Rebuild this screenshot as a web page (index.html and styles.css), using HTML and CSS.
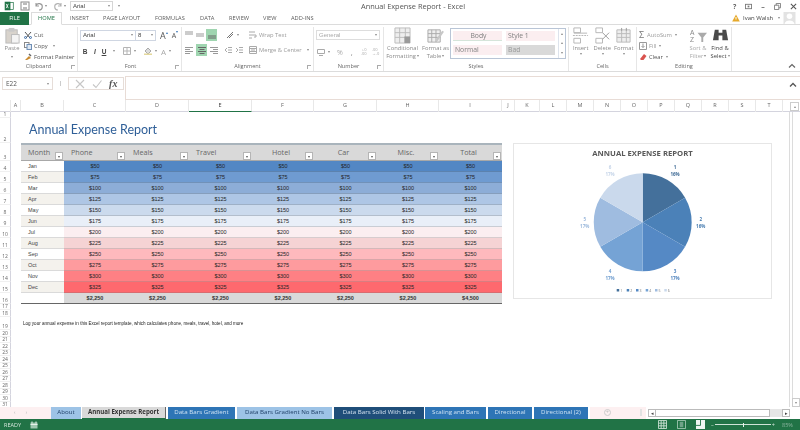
FILE: index.html
```html
<!DOCTYPE html>
<html lang="en">
<head>
<meta charset="utf-8">
<title>Annual Expense Report - Excel</title>
<link rel="stylesheet" href="styles.css">
</head>
<body>
<div class="app">
  <header class="titlebar">
    <div class="qat">
      <svg class="ic14" viewBox="0 0 14 14"><rect x="5" y="2" width="8" height="10" fill="#fff" stroke="#217346"/><rect x="1" y="1" width="8" height="12" fill="#217346"/><path d="M3 4l3 6M6 4l-3 6" stroke="#fff" stroke-width="1.1"/></svg>
      <svg class="ic10 save" viewBox="0 0 10 10"><rect x="1" y="1" width="8" height="8" fill="none" stroke="#8a8a8a"/><rect x="3" y="1.500" width="4" height="2.500" fill="#bbb"/><rect x="3" y="6" width="4" height="3" fill="#bbb"/></svg>
      <svg class="ic10 undo" viewBox="0 0 10 10"><path d="M2 5a3.200 3.200 0 1 1 3 4M2 2v3h3" fill="none" stroke="#9a9a9a" stroke-width="1.100"/></svg>
      <i class="dd tight"></i>
      <svg class="ic10 redo" viewBox="0 0 10 10"><path d="M8 5a3.200 3.200 0 1 0-3 4M8 2v3H5" fill="none" stroke="#b4b4b4" stroke-width="1.100"/></svg>
      <i class="dd tight"></i>
      <div class="qat-font">Arial<i class="dd"></i></div>
      <i class="dd qat-more"></i>
    </div>
    <div class="doc-title">Annual Expense Report - Excel</div>
    <div class="winbtns"><span>?</span>
      <svg class="ic8" viewBox="0 0 8 8"><rect x=".5" y="1.500" width="7" height="5" fill="none" stroke="#777"/><path d="M3 3h2v2H3z" fill="#777"/></svg>
      <span>–</span>
      <svg class="ic8" viewBox="0 0 8 8"><path d="M.5 2.500h5v5h-5zM2.500 2.500v-2h5v5h-2" fill="none" stroke="#777"/></svg>
      <svg class="ic8" viewBox="0 0 8 8"><path d="M1 1l6 6M7 1l-6 6" stroke="#555" stroke-width="1.200"/></svg>
    </div>
  </header>

  <nav class="tabsrow">
    <a class="tab file">FILE</a>
    <a class="tab home">HOME</a>
    <a class="tab t-insert">INSERT</a>
    <a class="tab t-layout">PAGE LAYOUT</a>
    <a class="tab t-form">FORMULAS</a>
    <a class="tab t-data">DATA</a>
    <a class="tab t-rev">REVIEW</a>
    <a class="tab t-view">VIEW</a>
    <a class="tab t-add">ADD-INS</a>
    <div class="user">
      <svg class="ic8" viewBox="0 0 8 8"><path d="M4 .5L7.800 7.500H.2z" fill="#e6a92b"/><path d="M4 3v2.500" stroke="#fff"/></svg>
      <span class="uname">Ivan Walsh</span><i class="dd"></i>
      <svg class="avatar" viewBox="0 0 13 13"><rect width="13" height="13" fill="#e3e3e3"/><circle cx="6.500" cy="4.500" r="3" fill="#fff"/><path d="M1 13c1-5 10-5 11 0z" fill="#fff"/></svg>
    </div>
  </nav>

  <section class="ribbon">
    <div class="grp g-clip">
      <div class="body">
        <div class="bigbtn paste">
          <svg class="big" viewBox="0 0 16 18"><rect x="1" y="3" width="12" height="14" fill="#d8d3cc" stroke="#bbb"/><rect x="4" y="1" width="6" height="4" fill="#c9c9c9"/><rect x="7" y="8" width="8" height="9" fill="#f4f4f4" stroke="#bbb"/></svg>
          <span>Paste</span><i class="dd"></i>
        </div>
        <div class="smallcol">
          <div class="sm dark"><svg class="ic8" viewBox="0 0 8 8"><path d="M1 1l5 6M7 1L2 7" stroke="#555"/><circle cx="1.500" cy="6.500" r="1" fill="none" stroke="#3e6ea8"/><circle cx="6.500" cy="6.500" r="1" fill="none" stroke="#3e6ea8"/></svg>Cut</div>
          <div class="sm dark"><svg class="ic8" viewBox="0 0 8 8"><rect x=".5" y=".5" width="4.500" height="5" fill="#fff" stroke="#888"/><rect x="3" y="2.500" width="4.500" height="5" fill="#dfe8f3" stroke="#6f8fb5"/></svg>Copy<i class="dd"></i></div>
          <div class="sm dark"><svg class="ic8" viewBox="0 0 8 8"><path d="M1 7l4-4 2 2-4 2z" fill="#c98a2f"/><path d="M5 1l2 2" stroke="#666" stroke-width="1.500"/></svg>Format Painter</div>
        </div>
      </div>
      <div class="glabel">Clipboard<i class="launch"></i></div>
    </div>

    <div class="grp g-font">
      <div class="body stack">
        <div class="line l1">
          <div class="field f-name">Arial<i class="dd"></i></div>
          <div class="field f-size">8<i class="dd"></i></div>
          <span class="bigA">A<sup>▴</sup></span><span class="smallA">A<sup>▾</sup></span>
        </div>
        <div class="line l2">
          <b class="tb">B</b><em class="tb">I</em><u class="tb">U</u><i class="dd"></i>
          <svg class="ic8 pipe" viewBox="0 0 8 8"><path d="M.5.5h7v7h-7zM4 .5v7M.5 4h7" fill="none" stroke="#b5b5b5"/></svg><i class="dd"></i>
          <svg class="ic8 pipe" viewBox="0 0 8 8"><path d="M4 1l3 3-3 3-3-3z" fill="#ddd" stroke="#aaa"/><rect y="6.500" width="8" height="1.500" fill="#e3d89c"/></svg><i class="dd"></i>
          <span class="fontA">A</span><i class="dd"></i>
        </div>
      </div>
      <div class="glabel">Font<i class="launch"></i></div>
    </div>

    <div class="grp g-align">
      <div class="body stack">
        <div class="line al1">
          <svg class="ic8" viewBox="0 0 8 8"><path d="M0 1h8M0 3h8" stroke="#999"/></svg>
          <svg class="ic8" viewBox="0 0 8 8"><path d="M0 3h8M0 5h8" stroke="#999"/></svg>
          <span class="hl"><svg class="ic8" viewBox="0 0 8 8"><path d="M0 5h8M0 7h8" stroke="#666"/></svg></span>
          <svg class="ic8 orient" viewBox="0 0 8 8"><path d="M1 7l6-6M3 7l4-4" stroke="#777"/></svg><i class="dd"></i>
          <span class="wrap sm"><svg class="ic8" viewBox="0 0 8 8"><path d="M0 1h6M0 4h7v2H5M0 7h3" fill="none" stroke="#aaa"/></svg>Wrap Text</span>
        </div>
        <div class="line al2">
          <svg class="ic8" viewBox="0 0 8 8"><path d="M0 1.500h8M0 3.500h5M0 5.500h8M0 7.500h5" stroke="#999"/></svg>
          <span class="hl hl2"><svg class="ic8" viewBox="0 0 8 8"><path d="M0 1.500h8M1.500 3.500h5M0 5.500h8M1.500 7.500h5" stroke="#666"/></svg></span>
          <svg class="ic8" viewBox="0 0 8 8"><path d="M0 1.500h8M3 3.500h5M0 5.500h8M3 7.500h5" stroke="#999"/></svg>
          <svg class="ic8 indent" viewBox="0 0 8 8"><path d="M4 1.500h4M4 4h4M4 6.500h4M3 2L1 4l2 2" fill="none" stroke="#aaa"/></svg>
          <svg class="ic8" viewBox="0 0 8 8"><path d="M4 1.500h4M4 4h4M4 6.500h4M1 2l2 2-2 2" fill="none" stroke="#aaa"/></svg>
          <span class="merge sm"><svg class="ic8" viewBox="0 0 8 8"><path d="M.5.5h7v7h-7zM.5 2.500h7M.5 5.500h7M2 4h4" fill="none" stroke="#aaa"/></svg>Merge &amp; Center<i class="dd"></i></span>
        </div>
      </div>
      <div class="glabel">Alignment<i class="launch"></i></div>
    </div>

    <div class="grp g-num">
      <div class="body stack">
        <div class="line"><div class="field f-gen">General<i class="dd"></i></div></div>
        <div class="line num2">
          <svg class="ic8" viewBox="0 0 8 8"><path d="M.5 1.500h7v4h-7zM2 7.500h4" fill="none" stroke="#aaa"/></svg><i class="dd"></i>
          <span class="pct">%</span><span class="comma">,</span>
          <span class="dec">+.0<br>.00</span><span class="dec">.00<br>→.0</span>
        </div>
      </div>
      <div class="glabel">Number<i class="launch"></i></div>
    </div>

    <div class="grp g-sty">
      <div class="body">
        <div class="bigbtn cf">
          <svg class="big" viewBox="0 0 18 18"><path d="M1 1h16v16H1zM1 6h16M1 11h16M6 1v16M12 1v16" fill="#eee" stroke="#bbb"/><rect x="11" y="10" width="6" height="7" fill="#9a9a9a"/></svg>
          <span>Conditional</span><span>Formatting<i class="dd"></i></span>
        </div>
        <div class="bigbtn ft">
          <svg class="big" viewBox="0 0 18 18"><path d="M1 3h13v13H1zM1 7h13M1 11h13M5 3v13M9.500 3v13" fill="#eee" stroke="#aaa"/><path d="M9 14L16 4l2 1-7 10z" fill="#c7c7c7"/></svg>
          <span>Format as</span><span>Table<i class="dd"></i></span>
        </div>
        <div class="gallery">
          <div class="cells">
            <span class="cs body-s">Body</span><span class="cs style1">Style 1</span>
            <span class="cs normal">Normal</span><span class="cs bad">Bad</span>
          </div>
          <div class="gscroll"><i class="dd up"></i><i class="dd up"></i><i class="dd"></i></div>
        </div>
      </div>
      <div class="glabel">Styles</div>
    </div>

    <div class="grp g-cells">
      <div class="body">
        <div class="bigbtn cell">
          <svg class="big" viewBox="0 0 18 18"><path d="M2 1h7v5H2zM2 12h7v5H2zM2 6.500h14" fill="none" stroke="#b5b5b5"/><path d="M1 9h16" stroke="#b5b5b5" stroke-dasharray="2 1"/></svg>
          <span>Insert</span><i class="dd"></i>
        </div>
        <div class="bigbtn cell">
          <svg class="big" viewBox="0 0 18 18"><path d="M2 1h7v5H2zM2 12h7v5H2z" fill="none" stroke="#b5b5b5"/><path d="M9 6l7 7M16 6l-7 7" stroke="#999"/></svg>
          <span>Delete</span><i class="dd"></i>
        </div>
        <div class="bigbtn cell">
          <svg class="big" viewBox="0 0 18 18"><path d="M2 3h14v13H2zM2 7h14M2 11h14M7 3v13M12 3v13" fill="#eee" stroke="#bbb"/><path d="M7 1v3M12 1v3" stroke="#999"/></svg>
          <span>Format</span><i class="dd"></i>
        </div>
      </div>
      <div class="glabel">Cells</div>
    </div>

    <div class="grp g-edit">
      <div class="body">
        <div class="smallcol edit">
          <div class="sm"><span class="sigma">Σ</span>AutoSum<i class="dd"></i></div>
          <div class="sm"><svg class="ic8" viewBox="0 0 8 8"><path d="M.5.5h7v7h-7zM4 1.500v4M2.500 4L4 5.500 5.500 4" fill="none" stroke="#999"/></svg>Fill<i class="dd"></i></div>
          <div class="sm dark"><svg class="ic8" viewBox="0 0 8 8"><path d="M1 6l4-5 2.500 2-3 4H2z" fill="#d9534f"/></svg>Clear<i class="dd"></i></div>
        </div>
        <div class="bigbtn sort">
          <svg class="big" viewBox="0 0 18 18"><text x="0" y="8" class="az">A</text><text x="0" y="16" class="az">Z</text><path d="M8 6h10l-4 5v5h-2v-5z" fill="#aaa"/></svg>
          <span>Sort &amp;</span><span>Filter<i class="dd"></i></span>
        </div>
        <div class="bigbtn find dark">
          <svg class="big" viewBox="0 0 18 18"><path d="M3 3h4v3h4V3h4l2 11h-6V9H7v5H1z" fill="#4a4a4a"/></svg>
          <span>Find &amp;</span><span>Select<i class="dd"></i></span>
        </div>
      </div>
      <div class="glabel">Editing</div>
    </div>
    <div class="collapse"><svg class="ic8" viewBox="0 0 8 8"><path d="M1 5.500l3-3 3 3" fill="none" stroke="#666" stroke-width="1.200"/></svg></div>
  </section>

  <section class="formula">
    <div class="namebox">E22<i class="dd"></i></div>
    <div class="dots"></div>
    <div class="fxbox">
      <svg class="ic10" viewBox="0 0 10 10"><path d="M1 1l8 8M9 1l-8 8" stroke="#c6c6c6" stroke-width="1.100"/></svg>
      <svg class="ic10" viewBox="0 0 10 10"><path d="M1 5.500l3 3 5.500-7" fill="none" stroke="#c6c6c6" stroke-width="1.100"/></svg>
      <span class="fx">fx</span>
    </div>
    <div class="finput"><svg class="ic8" viewBox="0 0 8 8"><path d="M1 5.500l3-3 3 3" fill="none" stroke="#555" stroke-width="1.300"/></svg></div>
  </section>

  <div class="colheads">
    <span class="corner"></span><span>A</span><span>B</span><span>C</span><span>D</span><span class="sel">E</span><span>F</span><span>G</span><span>H</span><span>I</span><span>J</span><span>K</span><span>L</span><span>M</span><span>N</span><span>O</span><span>P</span><span>Q</span><span>R</span><span>S</span><span>T</span>
    <span class="up-btn"><i class="dd up"></i></span>
  </div>

  <main class="sheetwrap">
    <div class="sheet">
      <div class="rh">1</div>
      <div class="rh">2</div><h1 class="title">Annual Expense Report</h1>
      <div class="rh">3</div>
      <div class="th m">Month<i class="fb"></i></div><div class="th">Phone<i class="fb"></i></div><div class="th">Meals<i class="fb"></i></div><div class="th">Travel<i class="fb"></i></div><div class="th ctr">Hotel<i class="fb"></i></div><div class="th ctr">Car<i class="fb"></i></div><div class="th ctr">Misc.<i class="fb"></i></div><div class="th ctr">Total<i class="fb"></i></div>
      <div class="rh">4</div><div class="mo">Jan</div><div class="v r1">$50</div><div class="v r1">$50</div><div class="v r1">$50</div><div class="v r1">$50</div><div class="v r1">$50</div><div class="v r1">$50</div><div class="v r1">$50</div>
      <div class="rh">5</div><div class="mo alt">Feb</div><div class="v r2">$75</div><div class="v r2">$75</div><div class="v r2">$75</div><div class="v r2">$75</div><div class="v r2">$75</div><div class="v r2">$75</div><div class="v r2">$75</div>
      <div class="rh">6</div><div class="mo">Mar</div><div class="v r3">$100</div><div class="v r3">$100</div><div class="v r3">$100</div><div class="v r3">$100</div><div class="v r3">$100</div><div class="v r3">$100</div><div class="v r3">$100</div>
      <div class="rh">7</div><div class="mo alt">Apr</div><div class="v r4">$125</div><div class="v r4">$125</div><div class="v r4">$125</div><div class="v r4">$125</div><div class="v r4">$125</div><div class="v r4">$125</div><div class="v r4">$125</div>
      <div class="rh">8</div><div class="mo">May</div><div class="v r5">$150</div><div class="v r5">$150</div><div class="v r5">$150</div><div class="v r5">$150</div><div class="v r5">$150</div><div class="v r5">$150</div><div class="v r5">$150</div>
      <div class="rh">9</div><div class="mo alt">Jun</div><div class="v r6">$175</div><div class="v r6">$175</div><div class="v r6">$175</div><div class="v r6">$175</div><div class="v r6">$175</div><div class="v r6">$175</div><div class="v r6">$175</div>
      <div class="rh">10</div><div class="mo">Jul</div><div class="v r7">$200</div><div class="v r7">$200</div><div class="v r7">$200</div><div class="v r7">$200</div><div class="v r7">$200</div><div class="v r7">$200</div><div class="v r7">$200</div>
      <div class="rh">11</div><div class="mo alt">Aug</div><div class="v r8">$225</div><div class="v r8">$225</div><div class="v r8">$225</div><div class="v r8">$225</div><div class="v r8">$225</div><div class="v r8">$225</div><div class="v r8">$225</div>
      <div class="rh">12</div><div class="mo">Sep</div><div class="v r9">$250</div><div class="v r9">$250</div><div class="v r9">$250</div><div class="v r9">$250</div><div class="v r9">$250</div><div class="v r9">$250</div><div class="v r9">$250</div>
      <div class="rh">13</div><div class="mo alt">Oct</div><div class="v r10">$275</div><div class="v r10">$275</div><div class="v r10">$275</div><div class="v r10">$275</div><div class="v r10">$275</div><div class="v r10">$275</div><div class="v r10">$275</div>
      <div class="rh">14</div><div class="mo">Nov</div><div class="v r11">$300</div><div class="v r11">$300</div><div class="v r11">$300</div><div class="v r11">$300</div><div class="v r11">$300</div><div class="v r11">$300</div><div class="v r11">$300</div>
      <div class="rh">15</div><div class="mo alt">Dec</div><div class="v r12">$325</div><div class="v r12">$325</div><div class="v r12">$325</div><div class="v r12">$325</div><div class="v r12">$325</div><div class="v r12">$325</div><div class="v r12">$325</div>
      <div class="rh">16</div><div class="tot blank"></div><div class="tot">$2,250</div><div class="tot">$2,250</div><div class="tot">$2,250</div><div class="tot">$2,250</div><div class="tot">$2,250</div><div class="tot">$2,250</div><div class="tot">$4,500</div>
      <div class="rh">17</div>
      <div class="rh">18</div>
      <div class="rh">19</div><p class="note">Log your annual expense in this Excel report template, which calculates phone, meals, travel, hotel, and more</p>
      <div class="rh">20</div><div class="rh">21</div><div class="rh">22</div><div class="rh">23</div><div class="rh">24</div><div class="rh">25</div><div class="rh">26</div><div class="rh">27</div><div class="rh">28</div><div class="rh">29</div><div class="rh">30</div><div class="rh">31</div>
    </div>

    <figure class="chart">
      <figcaption class="chart-title">ANNUAL EXPENSE REPORT</figcaption>
      <svg class="pie" viewBox="0 0 257 154">
        <g transform="translate(128.700 78.300)">
          <path d="M0 0V-49A49 49 0 0 1 42.400-24.500Z" fill="#44709b"/>
          <path d="M0 0L42.400-24.500A49 49 0 0 1 42.400 24.500Z" fill="#4b81b8"/>
          <path d="M0 0L42.400 24.500A49 49 0 0 1 0 49Z" fill="#5589c5"/>
          <path d="M0 0V49A49 49 0 0 1-42.400 24.500Z" fill="#75a3d5"/>
          <path d="M0 0L-42.400 24.500A49 49 0 0 1-42.400-24.500Z" fill="#9fbce0"/>
          <path d="M0 0L-42.400-24.500A49 49 0 0 1 0-49Z" fill="#cad9ec"/>
        </g>
        <g class="pl">
          <text x="161" y="25" fill="#3f6b96">1</text><text x="161" y="32.300" fill="#3f6b96">16%</text>
          <text x="186.700" y="76.700" fill="#477cb0">2</text><text x="186.700" y="83.700" fill="#477cb0">16%</text>
          <text x="161" y="128.700" fill="#4f83bd">3</text><text x="161" y="135.700" fill="#4f83bd">17%</text>
          <text x="96" y="128.700" fill="#6f9dcf">4</text><text x="96" y="135.700" fill="#6f9dcf">17%</text>
          <text x="70.700" y="76.700" fill="#9cb9dc">5</text><text x="70.700" y="83.700" fill="#9cb9dc">17%</text>
          <text x="96" y="25" fill="#c5d4e8">6</text><text x="96" y="32.300" fill="#c5d4e8">17%</text>
        </g>
        <g class="lg">
          <rect x="102.700" y="145" width="2.500" height="2.500" fill="#44709b"/><text x="106.200" y="147.800">1</text>
          <rect x="112.700" y="145" width="2.500" height="2.500" fill="#4b81b8"/><text x="116.200" y="147.800">2</text>
          <rect x="122" y="145" width="2.500" height="2.500" fill="#5589c5"/><text x="125.500" y="147.800">3</text>
          <rect x="131.700" y="145" width="2.500" height="2.500" fill="#75a3d5"/><text x="135.200" y="147.800">4</text>
          <rect x="141" y="145" width="2.500" height="2.500" fill="#9fbce0"/><text x="144.500" y="147.800">5</text>
          <rect x="150.300" y="145" width="2.500" height="2.500" fill="#cad9ec"/><text x="153.800" y="147.800">6</text>
        </g>
      </svg>
    </figure>

    <div class="vscroll"><span class="vdown"><i class="dd"></i></span></div>
  </main>

  <div class="sheettabs">
    <div class="pink nav"><span>‹</span><span>›</span></div>
    <a class="st lb w-about">About</a>
    <a class="st active w-aer">Annual Expense Report</a>
    <a class="st blue w-dbg">Data Bars Gradient</a>
    <a class="st lb w-dbn">Data Bars Gradient No Bars</a>
    <a class="st navy w-dbs">Data Bars Solid With Bars</a>
    <a class="st blue w-sb">Scaling and Bars</a>
    <a class="st blue w-dir">Directional</a>
    <a class="st blue w-dir2">Directional (2)</a>
    <div class="pink plus"><span class="pbtn">+</span><span class="grip"></span></div>
    <div class="hscroll"><span class="harrow">◂</span><span class="hthumb"></span><span class="htrack"></span><span class="harrow">▸</span></div>
  </div>

  <footer class="status">
    <span class="ready">READY</span>
    <svg class="ic8 macro" viewBox="0 0 8 8"><path d="M.5 1.500h7v6h-7z" fill="#9fc7b0"/><path d="M2 .5v2M6 .5v2M.5 3.500h7" stroke="#e6f1ea"/></svg>
    <div class="views">
      <svg class="ic10" viewBox="0 0 10 10"><path d="M.5.5h9v9h-9zM3.500.5v9M6.500.5v9M.5 3.500h9M.5 6.500h9" fill="none" stroke="#cfe3d7"/></svg>
      <svg class="ic10" viewBox="0 0 10 10"><path d="M.5.5h9v9h-9z" fill="none" stroke="#a6c9b5"/><rect x="3" y="2" width="4" height="6" fill="#6fa388"/></svg>
      <svg class="ic10" viewBox="0 0 10 10"><rect width="10" height="10" fill="#eef5f1"/><path d="M5 0v6H0" fill="none" stroke="#217346"/></svg>
    </div>
    <div class="zoom"><span>–</span><span class="slider"><i></i></span><span>+</span></div>
    <span class="pctz">85%</span>
  </footer>
</div>
</body>
</html>
```

FILE: styles.css
```css
* { box-sizing: border-box; margin: 0; padding: 0; }
html, body { width: 800px; height: 430px; overflow: hidden; background: #fff; }
body { font-family: "Open Sans", "Liberation Sans", sans-serif; color: #666; font-size: 6.500px; }
.app { width: 800px; height: 430px; display: flex; flex-direction: column; filter: blur(.3px); }
svg { display: block; flex: none; }
.ic8 { width: 8px; height: 8px; }
.ic10 { width: 10px; height: 10px; }
.ic14 { width: 10px; height: 10px; }
.dd { display: inline-block; flex: none; width: 0; height: 0; border-left: 1.500px solid transparent; border-right: 1.500px solid transparent; border-top: 2px solid #888; margin-left: 3px; vertical-align: middle; }
.dd.up { border-top: 0; border-bottom: 2px solid #888; }
.dd.tight { margin-left: 1px; }

/* title bar */
.titlebar { height: 12px; display: flex; align-items: center; position: relative; padding-left: 4px; }
.qat { display: flex; align-items: center; }
.save { margin-left: 6px; }
.undo { margin-left: 4px; }
.redo { margin-left: 6px; }
.qat-font { margin-left: 4px; width: 43px; height: 10px; border: 1px solid #d5d5d5; font: 6px/8px "Liberation Sans", sans-serif; color: #444; padding: 0 2px; display: flex; align-items: center; justify-content: space-between; }
.qat-more { margin-left: 5px; }
.doc-title { flex: 1; text-align: center; font-size: 7.400px; color: #555; margin-left: -26px; }
.winbtns { display: flex; width: 68px; align-items: center; gap: 9px; font-size: 7px; font-weight: 700; padding-left: 1px; }
.winbtns .ic8 { width: 7px; height: 7px; }

/* tabs */
.tabsrow { height: 13px; display: flex; align-items: stretch; position: relative; border-bottom: 1px solid #dcdcdc; }
.tab { font-size: 5.700px; line-height: 13px; color: #5a5a5a; flex: none; white-space: nowrap; }
.file { width: 29px; background: #217346; color: #fff; margin-bottom: -1px; text-align: center; }
.home { width: 31px; margin-left: 2px; color: #217346; border: 1px solid #dcdcdc; border-bottom: 1px solid #fff; line-height: 11px; height: 13px; text-align: center; }
.t-insert { margin-left: 8px; width: 18px; }
.t-layout { margin-left: 15px; width: 37px; }
.t-form { margin-left: 15px; width: 30px; }
.t-data { margin-left: 15px; width: 14px; }
.t-rev { margin-left: 15px; width: 20px; }
.t-view { margin-left: 14px; width: 11px; }
.t-add { margin-left: 17px; width: 24px; }
.user { margin-left: auto; display: flex; align-items: center; padding-right: 4px; color: #444; }
.uname { margin-left: 3px; width: 32px; font-size: 6px; white-space: nowrap; }
.avatar { width: 13px; height: 12px; margin-left: 3px; }

/* ribbon */
.ribbon { height: 47px; display: flex; border-bottom: 1px solid #dcdcdc; position: relative; padding-top: 2px; }
.grp { display: flex; flex-direction: column; border-right: 1px solid #e6e6e6; flex: none; }
.g-clip { width: 78px; }
.g-font { width: 104px; padding-left: 2px; }
.g-align { width: 132px; }
.g-num { width: 70px; }
.g-sty { width: 185px; }
.g-cells { width: 68px; }
.g-edit { width: 95px; }
.body { flex: 1; display: flex; min-height: 0; }
.body.stack { flex-direction: column; }
.glabel { height: 9px; line-height: 9px; font-size: 5.600px; text-align: center; position: relative; color: #666; }
.launch { position: absolute; right: 2px; top: 3px; width: 4px; height: 4px; border-left: 1px solid #aaa; border-bottom: 1px solid #aaa; transform: scaleY(-1); }
.bigbtn { display: flex; flex-direction: column; align-items: center; line-height: 7.500px; color: #8a8a8a; text-align: center; font-size: 5.800px; flex: none; }
.bigbtn .dd { margin-left: 1px; }
.big { width: 17px; height: 17px; margin-bottom: 1px; }
.paste { width: 24px; }
.paste .dd { margin: 3px 0 0; }
.smallcol { display: flex; flex-direction: column; padding-top: 2px; }
.sm { display: flex; align-items: center; gap: 2px; height: 11.500px; color: #9a9a9a; white-space: nowrap; font-size: 5.800px; }
.dark { color: #555; }
.bigbtn.dark { color: #444; }
.line { display: flex; align-items: center; flex: none; }
.l1 { height: 12px; margin-top: 2px; }
.l2 { height: 12px; margin-top: 4px; color: #444; }
.l2 u + .dd { margin-left: 5px; }
.field { height: 11px; border: 1px solid #cfd6e2; display: flex; align-items: center; justify-content: space-between; padding: 0 2px; font: 6px "Liberation Sans", sans-serif; color: #444; }
.f-name { width: 56px; }
.f-size { width: 21px; margin-left: -1px; }
.bigA { margin-left: 4px; font-size: 9px; color: #555; }
.smallA { margin-left: 4px; font-size: 7px; color: #555; }
.bigA sup, .smallA sup { font-size: 4px; color: #3d78b8; vertical-align: 5px; line-height: 0; }
.tb { font: 700 6.500px "Liberation Sans", sans-serif; width: 10px; text-align: center; color: #444; }
em.tb { font-style: italic; }
u.tb { width: 8px; }
.pipe { margin-left: 8px; }
.fontA { margin-left: 4px; font-size: 8px; color: #aaa; }
.g-align .line { padding-left: 3px; gap: 3px; }
.al1 { height: 13px; margin-top: 1px; }
.al1 > .dd { margin-left: 0; }
.al2 { height: 12px; margin-top: 3px; }
.hl { width: 11px; height: 12px; background: #9fd5b0; display: flex; align-items: center; justify-content: center; flex: none; margin: 0 -1px; }
.hl2 { margin: 0; }
.orient { margin-left: 7px; }
.indent { margin-left: 3px; }
.wrap { margin-left: 7px; }
.merge { margin-left: 3px; }
.g-num .line { padding-left: 2px; }
.f-gen { width: 64px; height: 10px; color: #aaa; margin-top: 3px; border-color: #ddd; }
.num2 { margin-top: 6px; height: 12px; padding-left: 3px !important; color: #aaa; }
.pct { margin-left: 7px; font-size: 7px; }
.comma { margin-left: 8px; font-weight: 700; width: 12px; }
.dec { font-size: 4px; line-height: 4px; width: 13px; }
.cf { width: 37px; }
.ft { width: 29px; }
.gallery { width: 116px; height: 31px; margin-top: 1px; border: 1px solid #b9c5d6; display: flex; }
.cells { flex: 1; display: grid; grid-template-columns: 49px 49px; grid-auto-rows: 10px; gap: 4px 4px; padding: 2px 0 0 2px; }
.cs { font-size: 6.800px; line-height: 10px; background: #fbeef0; color: #808080; padding-left: 2px; }
.body-s { text-align: center; border-bottom: 1px solid #d5e5da; }
.bad { background: #d9d9d9; color: #999; }
.gscroll { width: 7px; border-left: 1px solid #dde3ec; display: flex; flex-direction: column; justify-content: space-around; align-items: center; }
.gscroll .dd { margin: 0; }
.cell { width: 21.500px; }
.g-cells .body { padding-left: 1px; }
.edit { width: 50px; padding-left: 2px; flex: none; }
.edit .dd { margin-left: 1px; }
.sigma { font-size: 9px; color: #777; margin-right: 1px; }
.sort { width: 22px; color: #aaa; }
.find { width: 22px; }
.az { font: 7px "Liberation Sans", sans-serif; fill: #888; }
.collapse { flex: 1; display: flex; align-items: flex-end; justify-content: flex-end; padding: 0 4px 1px 0; }

/* formula bar */
.formula { height: 28px; display: flex; align-items: flex-start; padding: 4px 0 0 2px; }
.namebox { width: 51px; height: 13px; margin-top: 1px; border: 1px solid #e6ddd8; display: flex; align-items: center; justify-content: space-between; padding: 0 3px; font-size: 6.500px; color: #555; flex: none; }
.dots { width: 1px; height: 5px; background: #ccc; margin: 5px 6px 0 7px; flex: none; }
.fxbox { width: 56px; height: 13px; margin: 1px 1px 0 1px; border: 1px solid #e6ddd8; display: flex; align-items: center; justify-content: space-around; padding: 0 2px; flex: none; }
.fx { font: italic 700 10px/10px "Liberation Serif", serif; color: #555; }
.finput { flex: 1; height: 24px; border: 1px solid #e8dcd6; border-right: 0; display: flex; justify-content: flex-end; padding: 4px 3px 0 0; }

/* column headers */
.colheads { height: 12px; display: grid; grid-template-columns: 11px 10px 43px 62px 63px 63px 62px 63px 62px 63px 13px 25px 27px 27px 27px 27px 27px 27px 27px 27px 27px 7px 9px; border-bottom: 1px solid #d4d4de; font-size: 5.500px; line-height: 11px; text-align: center; color: #666; }
.colheads span { border-right: 1px solid #e8e8e8; }
.colheads .sel { border-bottom: 1px solid #217346; height: 12px; color: #444; }
.corner { grid-column: 1; }
.up-btn { grid-column: 23; border: 1px solid #ccc !important; height: 9px; margin-top: 2px; display: flex; align-items: center; justify-content: center; }
.up-btn .dd { margin: 0; }

/* sheet */
.sheetwrap { height: 295px; position: relative; overflow: hidden; }
.sheet { display: grid; grid-template-columns: 11px 10px 43px 62px 63px 63px 62px 63px 62px 63px; grid-template-rows: 6px 25px 18px repeat(12, 11px) 11px 6px 7px 13px repeat(12, 6.500px); }
.rh { grid-column: 1; border-right: 1px solid #d4d4de; font-size: 5px; line-height: 6px; color: #666; display: flex; align-items: flex-end; justify-content: center; border-bottom: 1px solid #f0f0f0; overflow: hidden; }
.title { grid-column: 3 / 11; font: 400 12.500px/18px "Lato", "Open Sans", sans-serif; color: #2f5f98; padding: 3px 0 0 8px; white-space: nowrap; }
.th { position: relative; background: #d9d9d9; border-top: 2px solid #a9b4bc; border-bottom: 1px solid #a8a8a8; font-size: 7.200px; color: #666; line-height: 14px; padding-left: 7px; }
.th.m { grid-column: 3; }
.th.ctr { text-align: center; padding: 0 4px 0 0; }
.fb { position: absolute; right: 1px; bottom: 0; width: 8px; height: 8px; background: #fff; border: 1px solid #b5b5b5; }
.fb::after { content: ""; position: absolute; left: 1.500px; top: 2.500px; border-left: 1.500px solid transparent; border-right: 1.500px solid transparent; border-top: 2px solid #555; }
.mo { grid-column: 3; background: #fff; font: 5.500px/10px "Liberation Sans", sans-serif; color: #444; padding-left: 7px; border-bottom: 1px solid #dadada; }
.mo.alt { background: #f4f2ed; }
.v { font: 5.500px/10px "Liberation Sans", sans-serif; color: #262626; text-align: center; border-bottom: 1px solid rgba(120,120,120,.28); }
.r1 { background: #5387c4; } .r2 { background: #6f9bd1; } .r3 { background: #8dadd7; }
.r4 { background: #aec6e5; } .r5 { background: #cbdaed; } .r6 { background: #e9eff8; }
.r7 { background: #fbeef0; } .r8 { background: #f5d3d4; } .r9 { background: #feb9bd; }
.r10 { background: #fe9b9e; } .r11 { background: #fe8084; } .r12 { background: #fe696e; }
.tot { background: #d9d9d9; border-bottom: 1px solid #666; font: 700 5.500px/10px "Liberation Sans", sans-serif; color: #333; text-align: center; }
.tot.blank { grid-column: 3; background: #fff; }
.note { grid-column: 3 / 11; margin-left: 2px; font: 4.550px/13px "Liberation Sans", sans-serif; color: #222; white-space: nowrap; }

/* chart */
.chart { position: absolute; left: 513px; top: 31px; width: 259px; height: 156px; border: 1px solid #e6e6e6; background: #fff; }
.chart-title { position: absolute; left: 0; right: 0; top: 4px; text-align: center; font: 700 7.700px/10px "Open Sans", sans-serif; color: #595959; }
.pie { width: 257px; height: 154px; }
.pl text { font: 700 4.500px "Open Sans", sans-serif; text-anchor: middle; }
.lg text { font: 3.500px "Open Sans", sans-serif; fill: #777; }

.vscroll { position: absolute; right: 0; top: 0; bottom: 0; width: 11px; border-left: 1px solid #dcdcdc; }
.vscroll::before { content: ""; position: absolute; left: 2px; right: 0; top: 0; bottom: 9px; border-left: 1px solid #dcdcdc; }
.vdown { position: absolute; left: 2px; bottom: 0; width: 8px; height: 9px; border: 1px solid #ccc; display: flex; align-items: center; justify-content: center; }
.vdown .dd { margin: 0; }

/* sheet tabs */
.sheettabs { height: 11.500px; display: flex; align-items: stretch; font-size: 6.150px; line-height: 10px; flex: none; }
.pink { background: #fdf0f1; flex: none; }
.nav { width: 51px; display: flex; justify-content: center; gap: 10px; color: #bbb; padding-right: 10px; }
.st { flex: none; text-align: center; white-space: nowrap; margin-right: 2px; overflow: hidden; }
.lb { background: #9dc3e6; color: #1f3f66; }
.blue { background: #2e75b6; color: #cfe2f3; }
.navy { background: #1f4e79; color: #d5e3f0; }
.active { background: #d9d9d9; color: #333; font-weight: 700; border-bottom: 1px solid #217346; border-right: 1px solid #666; }
.w-about { width: 30px; margin-right: 1px; }
.w-aer { width: 84px; margin-right: 2px; }
.w-dbg { width: 67px; }
.w-dbn { width: 95px; margin-right: 2px; }
.w-dbs { width: 90px; margin-right: 1px; }
.w-sb { width: 61px; }
.w-dir { width: 44px; }
.w-dir2 { width: 54px; }
.plus { width: 56px; display: flex; align-items: center; padding-left: 14px; }
.pbtn { width: 7px; height: 7px; border: 1px solid #ccc; border-radius: 50%; color: #bbb; font-size: 5px; line-height: 5px; text-align: center; }
.grip { width: 2px; height: 7px; background: #e2e2e2; margin-left: 29px; }
.hscroll { flex: 1; display: flex; align-items: center; padding: 0 10px 0 2px; }
.harrow { width: 8px; height: 8px; border: 1px solid #bbb; font-size: 5px; line-height: 6px; text-align: center; color: #444; flex: none; }
.hthumb { width: 115px; height: 8px; background: #fff; border: 1px solid #bbb; flex: none; margin-left: -1px; }
.htrack { flex: 1; height: 8px; background: #e6e6e6; }

/* status */
.status { flex: 1; background: #217346; margin-top: .5px; display: flex; align-items: center; padding-left: 4px; color: #d5e6dc; font-size: 5.500px; }
.ready { width: 26px; }
.views { margin-left: auto; display: flex; gap: 10px; }
.views .ic10 { width: 9px; height: 9px; }
.zoom { display: flex; align-items: center; gap: 1px; margin-left: 6px; width: 64px; }
.slider { flex: 1; height: 1px; background: #cfe3d7; position: relative; }
.slider i { position: absolute; left: 50%; top: -1.500px; width: 1px; height: 4px; background: #e8f2ec; }
.pctz { width: 25px; text-align: center; color: #8db5a0; }
```
